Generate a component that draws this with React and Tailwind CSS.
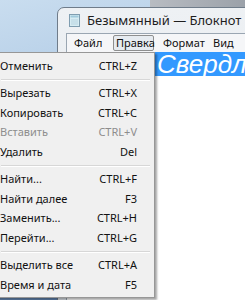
import React from 'react';

const items = [
  { label: 'Отменить', key: 'CTRL+Z' },
  'sep',
  { label: 'Вырезать', key: 'CTRL+X' },
  { label: 'Копировать', key: 'CTRL+C' },
  { label: 'Вставить', key: 'CTRL+V', disabled: true },
  { label: 'Удалить', key: 'Del' },
  'sep',
  { label: 'Найти...', key: 'CTRL+F' },
  { label: 'Найти далее', key: 'F3' },
  { label: 'Заменить...', key: 'CTRL+H' },
  { label: 'Перейти...', key: 'CTRL+G' },
  'sep',
  { label: 'Выделить все', key: 'CTRL+A' },
  { label: 'Время и дата', key: 'F5' },
];

const NotepadIcon = () => (
  <svg width="11" height="13" viewBox="0 0 11 13">
    <rect x="0.5" y="0.5" width="10" height="12" fill="#d6ecf3" stroke="#7f9db0" />
    <rect x="1.5" y="1.5" width="8" height="2" fill="#9fc9dc" />
    <path d="M2 6h7M2 8h7M2 10h7" stroke="#b7d3e0" strokeWidth="1" />
  </svg>
);

const EditMenu = () => (
  <div className="absolute left-[-20px] top-[52px] w-[175px] bg-[#f0f0f0] border border-[#979797] pt-[3px] pb-[2px] text-[11px] shadow-[2px_2px_2px_rgba(0,0,0,0.35)]">
    {items.map((it, i) =>
      it === 'sep' ? (
        <div key={i} className="h-[8px] flex flex-col justify-center pl-[20px] pr-[4px]">
          <div className="h-px bg-[#d7d7d7]" />
          <div className="h-px bg-white" />
        </div>
      ) : (
        <div
          key={i}
          className={`h-[19.5px] flex items-center justify-between pl-[19px] pr-[17px] ${
            it.disabled ? 'text-[#8d8d8d]' : 'text-[#111]'
          }`}
        >
          <span>{it.label}</span>
          <span>{it.key}</span>
        </div>
      )
    )}
  </div>
);

export default function App() {
  return (
    <div
      className="relative w-[245px] h-[300px] overflow-hidden bg-[linear-gradient(165deg,#c9ddef_0%,#aac6e3_40%,#85a7cf_65%,#4a6e9e_100%)] text-[11.5px]"
      style={{ fontFamily: '"Noto Sans", "Open Sans", sans-serif' }}
    >
      <div className="absolute left-[150px] top-0 w-[100px] h-[8px] bg-[linear-gradient(90deg,#b8bcc2,#9aa0a8)]" />
      <div className="absolute left-[57px] top-[7px] w-[220px] h-[320px] rounded-tl-[7px] border border-[#6f7c8a] bg-[linear-gradient(180deg,#eef1f4_0%,#dde3ea_100%)] flex flex-col">
        <div className="h-[25px] flex items-center gap-[7px] pl-[11px] text-[#1e1e1e] text-[13px]">
          <NotepadIcon />
          <span>Безымянный — Блокнот</span>
        </div>
        <div className="flex-1 ml-[8px] border-l border-t border-[#9aa6b2] flex flex-col">
          <div className="h-[18px] flex items-center bg-[#f5f6f8] text-[#111] text-[11px] pl-[7px] whitespace-nowrap">
            <span className="w-[39px]">Файл</span>
            <span className="w-[41px] h-[16px] pl-[2px] flex items-center border border-[#8e8f8f] rounded-[2px] bg-[#e6ebf0]">Правка</span>
            <span className="ml-[9px] w-[50px]">Формат</span>
            <span>Вид</span>
          </div>
          <div className="flex-1 bg-white">
            <div className="h-[24px] bg-[#3399ff] flex items-center pl-[90px] overflow-hidden">
              <span className="text-white italic text-[26px] leading-none whitespace-nowrap" style={{ fontFamily: '"Liberation Sans", Arial, sans-serif' }}>
                Свердл
              </span>
            </div>
          </div>
        </div>
      </div>
      <EditMenu />
    </div>
  );
}
